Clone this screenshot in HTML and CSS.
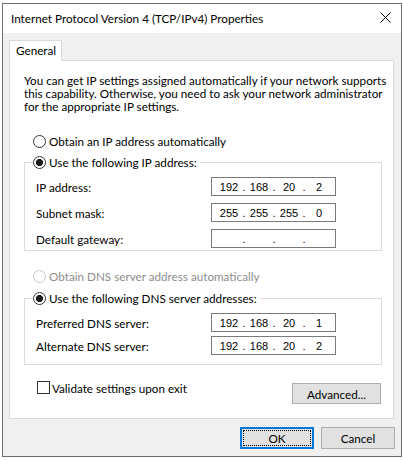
FILE: index.html
```html
<!DOCTYPE html>
<html>
<head>
<meta charset="utf-8">
<link rel="stylesheet" href="styles.css">
</head>
<body>
<div class="window">
  <div class="titlebar">
    <span class="title">Internet Protocol Version 4 (TCP/IPv4) Properties</span>
    <svg class="close" width="11" height="11" viewBox="0 0 11 11"><path d="M0.5 0.5 L10.5 10.5 M10.5 0.5 L0.5 10.5" stroke="#000" stroke-width="1" fill="none"/></svg>
  </div>
  <div class="body">
    <div class="tabs"><div class="tab">General</div></div>
    <div class="panel">
      <div class="intro">
        <div class="line">You can get IP settings assigned automatically if your network supports</div>
        <div class="line">this capability. Otherwise, you need to ask your network administrator</div>
        <div class="line">for the appropriate IP settings.</div>
      </div>
      <div class="radio-row first"><span class="radio"></span><span>Obtain an IP address automatically</span></div>
      <fieldset class="group ip-group">
        <legend><span class="radio checked"></span><span>Use the following IP address:</span></legend>
        <div class="field"><span class="label">IP address:</span>
          <div class="ip"><span class="seg">192</span><span class="dot">.</span><span class="seg">168</span><span class="dot">.</span><span class="seg">20</span><span class="dot">.</span><span class="seg">2</span></div>
        </div>
        <div class="field"><span class="label">Subnet mask:</span>
          <div class="ip"><span class="seg">255</span><span class="dot">.</span><span class="seg">255</span><span class="dot">.</span><span class="seg">255</span><span class="dot">.</span><span class="seg">0</span></div>
        </div>
        <div class="field"><span class="label">Default gateway:</span>
          <div class="ip"><span class="seg"></span><span class="dot">.</span><span class="seg"></span><span class="dot">.</span><span class="seg"></span><span class="dot">.</span><span class="seg"></span></div>
        </div>
      </fieldset>
      <div class="radio-row disabled"><span class="radio"></span><span>Obtain DNS server address automatically</span></div>
      <fieldset class="group dns-group">
        <legend><span class="radio checked"></span><span>Use the following DNS server addresses:</span></legend>
        <div class="field"><span class="label">Preferred DNS server:</span>
          <div class="ip"><span class="seg">192</span><span class="dot">.</span><span class="seg">168</span><span class="dot">.</span><span class="seg">20</span><span class="dot">.</span><span class="seg">1</span></div>
        </div>
        <div class="field"><span class="label">Alternate DNS server:</span>
          <div class="ip"><span class="seg">192</span><span class="dot">.</span><span class="seg">168</span><span class="dot">.</span><span class="seg">20</span><span class="dot">.</span><span class="seg">2</span></div>
        </div>
      </fieldset>
      <div class="bottom-row">
        <div class="check"><span class="checkbox"></span><span>Validate settings upon exit</span></div>
        <button class="btn advanced">Advanced...</button>
      </div>
    </div>
    <div class="actions">
      <button class="btn ok">OK</button>
      <button class="btn cancel">Cancel</button>
    </div>
  </div>
</div>
</body>
</html>
```

FILE: styles.css
```css
* { box-sizing: border-box; }
html, body { margin: 0; padding: 0; }
body {
  width: 403px;
  height: 461px;
  overflow: hidden;
  background: #ffffff;
  font-family: "Lato", "Liberation Sans", sans-serif;
  font-size: 11.7px;
  color: #000;
  padding-top: 3px;
  padding-left: 2px;
}
.window {
  width: 400px;
  height: 454px;
  border: 1px solid #6e6e6e;
  background: #f0f0f0;
  display: flex;
  flex-direction: column;
}
.titlebar {
  height: 29px;
  background: #fff;
  display: flex;
  align-items: center;
  padding-left: 8px;
  padding-bottom: 1px;
  white-space: nowrap;
}
.close { margin-left: auto; margin-right: 10px; align-self: flex-start; margin-top: 8px; }
.body {
  flex: 1;
  padding: 7px 6px 0 6px;
}
.tabs { display: flex; }
.tab {
  position: relative;
  z-index: 1;
  width: 53px;
  height: 21px;
  margin-bottom: -1px;
  background: #fff;
  border: 1px solid #d9d9d9;
  border-bottom: none;
  padding-left: 6px;
  line-height: 19px;
}
.panel {
  width: 385px;
  height: 359px;
  background: #fff;
  border: 1px solid #d9d9d9;
  padding: 13px 11px 0 14px;
  white-space: nowrap;
}
.intro .line {
  height: 13px;
  line-height: 13px;
}
.radio-row {
  display: flex;
  align-items: center;
  height: 16px;
  margin-left: 9px;
}
.radio-row.first { margin-top: 20px; }
.radio-row.disabled { margin-top: 17px; color: #8d8d8d; }
.radio {
  width: 13px;
  height: 13px;
  border: 1px solid #333;
  border-radius: 50%;
  background: #fff;
  margin-right: 3px;
  flex: none;
}
.radio.checked {
  background: radial-gradient(circle at center, #1a1a1a 0, #1a1a1a 3.2px, #fff 3.9px);
}
.disabled .radio { border-color: #c8c8c8; }
.group {
  margin: 5px 0 0 0;
  padding: 7px 0 2px 0;
  border: 1px solid #dcdcdc;
  min-width: 0;
}
.group legend {
  margin-left: 8px;
  padding: 0 3px 0 0;
  height: 16px;
  display: flex;
  align-items: center;
}
.dns-group { margin-top: 6px; padding-bottom: 9px; }
.field {
  display: flex;
  align-items: center;
  height: 19px;
  margin-left: 11px;
}
.ip-group .field + .field { margin-top: 7px; }
.dns-group .field + .field { margin-top: 4px; }
.label { width: 175px; flex: none; }
.ip {
  width: 125px;
  height: 19px;
  border: 1px solid #7a7a7a;
  background: #fff;
  display: flex;
  align-items: center;
  padding-left: 4px;
  font-family: "Liberation Sans", sans-serif;
  font-size: 11px;
}
.seg { width: 26px; text-align: center; }
.dot { width: 4px; text-align: center; }
.bottom-row {
  display: flex;
  justify-content: space-between;
  align-items: flex-start;
}
.check {
  display: flex;
  align-items: center;
  height: 13px;
  margin-top: 16px;
  margin-left: 13px;
}
.checkbox {
  width: 13px;
  height: 13px;
  border: 1px solid #333;
  background: #fff;
  margin-right: 2px;
  flex: none;
}
.btn {
  font-family: inherit;
  font-size: 11.7px;
  color: #000;
  background: #e1e1e1;
  border: 1px solid #adadad;
  padding: 0;
  margin: 0;
}
.advanced {
  width: 89px;
  height: 21px;
  margin-top: 18px;
  margin-right: 1px;
}
.actions {
  display: flex;
  justify-content: flex-end;
  gap: 7px;
  margin-top: 8px;
}
.actions .btn { width: 74px; height: 22px; }
.btn.ok {
  border: 2px solid #0078d7;
  outline: 1px dotted #000;
  outline-offset: -4px;
}
```
